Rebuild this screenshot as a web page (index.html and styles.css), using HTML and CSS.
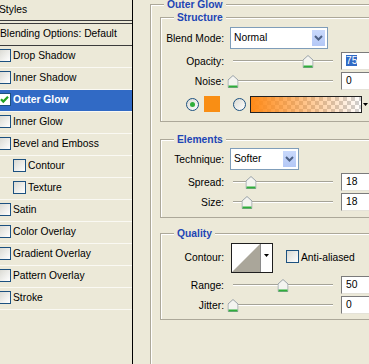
FILE: index.html
```html
<!DOCTYPE html>
<html lang="en">
<head>
    <meta charset="UTF-8">
    <title>Layer Style - Outer Glow</title>
    <link rel="stylesheet" href="styles.css">
</head>
<body>

<div class="window">
    <div class="styles-list">
        <div class="list-head">Styles</div>
        <div class="list-blend">Blending Options: Default</div>
        <div class="list-item"><span class="check"></span>Drop Shadow</div>
        <div class="list-item"><span class="check"></span>Inner Shadow</div>
        <div class="list-item selected">
            <span class="check checked">
                <svg width="11" height="11" viewBox="0 0 11 11"><path d="M2 5.2 L4.3 7.6 L9 2.8" fill="none" stroke="#21a121" stroke-width="2.2"/></svg>
            </span>Outer Glow
        </div>
        <div class="list-item"><span class="check"></span>Inner Glow</div>
        <div class="list-item"><span class="check"></span>Bevel and Emboss</div>
        <div class="list-item sub"><span class="check"></span>Contour</div>
        <div class="list-item sub"><span class="check"></span>Texture</div>
        <div class="list-item"><span class="check"></span>Satin</div>
        <div class="list-item"><span class="check"></span>Color Overlay</div>
        <div class="list-item"><span class="check"></span>Gradient Overlay</div>
        <div class="list-item"><span class="check"></span>Pattern Overlay</div>
        <div class="list-item"><span class="check"></span>Stroke</div>
    </div>

    <div class="panel">
        <fieldset class="group outer">
            <legend>Outer Glow</legend>

            <fieldset class="group structure">
                <legend>Structure</legend>
                <div class="row select-row">
                    <span class="label">Blend Mode:</span>
                    <div class="select blend">
                        <span class="select-text">Normal</span>
                        <span class="select-btn"><svg width="9" height="6" viewBox="0 0 9 6"><path d="M1 1 L4.5 4.5 L8 1" fill="none" stroke="#4d6185" stroke-width="2"/></svg></span>
                    </div>
                </div>
                <div class="row">
                    <span class="label">Opacity:</span>
                    <div class="slider">
                        <div class="track"></div>
                        <span class="thumb" style="left: 75%"><svg width="11" height="13" viewBox="0 0 11 13"><path d="M0.5 5 L5.5 0.5 L10.5 5 V12.5 H0.5 Z" fill="#f4f4f0" stroke="#9aa3a8"/><path d="M1 11.5 H10" stroke="#2fae3a" stroke-width="2"/></svg></span>
                    </div>
                    <span class="field"><span class="selected-text">75</span></span>
                </div>
                <div class="row">
                    <span class="label">Noise:</span>
                    <div class="slider">
                        <div class="track"></div>
                        <span class="thumb" style="left: 0%"><svg width="11" height="13" viewBox="0 0 11 13"><path d="M0.5 5 L5.5 0.5 L10.5 5 V12.5 H0.5 Z" fill="#f4f4f0" stroke="#9aa3a8"/><path d="M1 11.5 H10" stroke="#2fae3a" stroke-width="2"/></svg></span>
                    </div>
                    <span class="field">0</span>
                </div>
                <div class="color-row">
                    <span class="radio on"><span class="dot"></span></span>
                    <span class="swatch"></span>
                    <span class="radio"></span>
                    <span class="gradient"></span>
                    <span class="grad-arrow"><svg width="5" height="3" viewBox="0 0 5 3"><path d="M0 0 H5 L2.5 3 Z" fill="#000"/></svg></span>
                </div>
            </fieldset>

            <fieldset class="group elements">
                <legend>Elements</legend>
                <div class="row select-row">
                    <span class="label">Technique:</span>
                    <div class="select technique">
                        <span class="select-text">Softer</span>
                        <span class="select-btn"><svg width="9" height="6" viewBox="0 0 9 6"><path d="M1 1 L4.5 4.5 L8 1" fill="none" stroke="#4d6185" stroke-width="2"/></svg></span>
                    </div>
                </div>
                <div class="row">
                    <span class="label">Spread:</span>
                    <div class="slider">
                        <div class="track"></div>
                        <span class="thumb" style="left: 18%"><svg width="11" height="13" viewBox="0 0 11 13"><path d="M0.5 5 L5.5 0.5 L10.5 5 V12.5 H0.5 Z" fill="#f4f4f0" stroke="#9aa3a8"/><path d="M1 11.5 H10" stroke="#2fae3a" stroke-width="2"/></svg></span>
                    </div>
                    <span class="field">18</span>
                </div>
                <div class="row">
                    <span class="label">Size:</span>
                    <div class="slider">
                        <div class="track"></div>
                        <span class="thumb" style="left: 14%"><svg width="11" height="13" viewBox="0 0 11 13"><path d="M0.5 5 L5.5 0.5 L10.5 5 V12.5 H0.5 Z" fill="#f4f4f0" stroke="#9aa3a8"/><path d="M1 11.5 H10" stroke="#2fae3a" stroke-width="2"/></svg></span>
                    </div>
                    <span class="field">18</span>
                </div>
            </fieldset>

            <fieldset class="group quality">
                <legend>Quality</legend>
                <div class="contour-row">
                    <span class="label">Contour:</span>
                    <div class="contour-pick">
                        <span class="contour-img"><svg width="28" height="28" viewBox="0 0 28 28"><rect width="28" height="28" fill="#fff"/><path d="M0 28 L28 0 V28 Z" fill="#aaa69a"/></svg></span>
                        <span class="contour-arrow"><svg width="5" height="3" viewBox="0 0 5 3"><path d="M0 0 H5 L2.5 3 Z" fill="#000"/></svg></span>
                    </div>
                    <span class="check aa"></span>
                    <span class="aa-text">Anti-aliased</span>
                </div>
                <div class="row">
                    <span class="label">Range:</span>
                    <div class="slider">
                        <div class="track"></div>
                        <span class="thumb" style="left: 50%"><svg width="11" height="13" viewBox="0 0 11 13"><path d="M0.5 5 L5.5 0.5 L10.5 5 V12.5 H0.5 Z" fill="#f4f4f0" stroke="#9aa3a8"/><path d="M1 11.5 H10" stroke="#2fae3a" stroke-width="2"/></svg></span>
                    </div>
                    <span class="field">50</span>
                </div>
                <div class="row">
                    <span class="label">Jitter:</span>
                    <div class="slider">
                        <div class="track"></div>
                        <span class="thumb" style="left: 0%"><svg width="11" height="13" viewBox="0 0 11 13"><path d="M0.5 5 L5.5 0.5 L10.5 5 V12.5 H0.5 Z" fill="#f4f4f0" stroke="#9aa3a8"/><path d="M1 11.5 H10" stroke="#2fae3a" stroke-width="2"/></svg></span>
                    </div>
                    <span class="field">0</span>
                </div>
            </fieldset>
        </fieldset>
    </div>
</div>

</body>
</html>
```

FILE: styles.css
```css
* {
    margin: 0;
    padding: 0;
    box-sizing: border-box;
}

html, body {
    height: 100%;
    overflow: hidden;
}

body {
    background: #ece9d8;
    font-family: "Liberation Sans", Arial, sans-serif;
    font-size: 10.3px;
    color: #000;
}

.window {
    display: flex;
    width: 369px;
    height: 364px;
    overflow: hidden;
}

/* left: list of styles */
.styles-list {
    flex: 0 0 139px;
    margin-left: -6px;
    border-right: 1px solid #000;
}

.list-head {
    height: 24px;
    padding-left: 5px;
    line-height: 19px;
    border-bottom: 4px double #3c3c3c;
}

.list-blend {
    height: 22px;
    padding-left: 6px;
    line-height: 19px;
    border-bottom: 1px solid #3c3c3c;
}

.list-item {
    display: flex;
    align-items: center;
    height: 22px;
    padding-left: 4px;
    padding-bottom: 2px;
    border-bottom: 1px solid #faf9f3;
    white-space: nowrap;
}

.list-item.sub { padding-left: 19px; }

.list-item.selected {
    background: #316ac5;
    color: #fff;
    font-weight: bold;
}

.check {
    display: inline-flex;
    align-items: center;
    justify-content: center;
    width: 13px;
    height: 13px;
    margin-right: 2px;
    border: 1px solid #1c5180;
    background: linear-gradient(135deg, #d9d9d2, #fff);
    flex-shrink: 0;
}

.check.checked { background: #fff; }

/* right: options */
.panel {
    flex: 0 0 auto;
    padding-left: 17px;
}

.group {
    border: 1px solid #aca899;
    box-shadow: inset 1px 1px 0 #fff;
    min-inline-size: 0;
}

.group legend {
    margin-left: 13px;
    padding: 0 3px;
    line-height: 13px;
    font-weight: bold;
    color: #1d45b5;
    background: #ece9d8;
}

.group.outer {
    width: 260px;
    height: 400px;
    margin-top: -2px;
    padding-left: 9px;
}

.group.outer > legend { margin-left: 4px; }

.group.structure,
.group.elements,
.group.quality {
    width: 224px;
}

.structure { padding-bottom: 8px; }
.elements { margin-top: 11px; padding-bottom: 5px; }
.quality { margin-top: 9px; padding-bottom: 4px; }

.row {
    display: flex;
    align-items: center;
    height: 20px;
}

.structure .select-row { height: 22px; margin-top: 3px; margin-bottom: 2px; }
.elements .select-row { height: 22px; margin-top: 2px; margin-bottom: 2px; }

.label {
    width: 63px;
    flex-shrink: 0;
    text-align: right;
    white-space: nowrap;
}

.select {
    display: flex;
    height: 22px;
    margin-left: 6px;
    border: 1px solid #7f9db9;
    background: #fff;
}

.select.blend { width: 98px; }
.select.technique { width: 69px; }

.select-text {
    flex: 1;
    padding-left: 3px;
    line-height: 20px;
}

.select-btn {
    display: flex;
    align-items: center;
    justify-content: center;
    width: 15px;
    margin: 1px;
    border: 1px solid #fff;
    background: linear-gradient(#c9d9fc, #b4c8f6);
}

.slider {
    position: relative;
    display: flex;
    align-items: center;
    width: 100px;
    height: 20px;
    margin-left: 9px;
    flex-shrink: 0;
}

.track {
    width: 100%;
    height: 2px;
    border-top: 1px solid #a5a397;
    border-bottom: 1px solid #fff;
}

.thumb {
    position: absolute;
    top: 4px;
    display: flex;
    transform: translateX(-50%);
}

.field {
    width: 36px;
    height: 18px;
    margin-left: 8px;
    flex-shrink: 0;
    padding-left: 4px;
    line-height: 16px;
    background: #fff;
    border: 1px solid;
    border-color: #7b7b7b #e4e2d8 #e4e2d8 #7b7b7b;
}

.selected-text {
    background: #316ac5;
    color: #fff;
}

.color-row {
    display: flex;
    align-items: center;
    height: 18px;
    margin-top: 4px;
    padding-left: 25px;
}

.radio {
    display: flex;
    align-items: center;
    justify-content: center;
    width: 13px;
    height: 13px;
    border-radius: 50%;
    border: 1px solid #1c5180;
    background: linear-gradient(135deg, #d9d9d2, #fff);
}

.radio .dot {
    width: 5px;
    height: 5px;
    border-radius: 50%;
    background: #2fae3a;
}

.radio.on { margin-right: 5px; }

.swatch {
    width: 16px;
    height: 16px;
    margin-right: 13px;
    background: #f98e14;
}

.gradient {
    width: 112px;
    height: 17px;
    margin-left: 4px;
    border: 1px solid #222;
    background:
        linear-gradient(to right, #ff8a18, rgba(255, 138, 24, 0)),
        repeating-conic-gradient(#cfcfcf 0 25%, #fff 0 50%) 0 0 / 8px 8px;
}

.grad-arrow {
    display: flex;
    align-items: center;
    justify-content: center;
    width: 7px;
    height: 17px;
}

.contour-row {
    display: flex;
    align-items: flex-start;
    height: 30px;
    margin-top: 3px;
    margin-bottom: 2px;
}

.contour-row .label { line-height: 30px; }

.contour-pick {
    display: flex;
    width: 42px;
    height: 30px;
    margin-left: 7px;
    border: 1px solid #1e1e1e;
    background: #fff;
}

.contour-img { display: flex; }

.contour-arrow {
    flex: 1;
    display: flex;
    justify-content: center;
    padding-top: 10px;
    border-left: 1px solid #8a8a8a;
}

.check.aa {
    margin-left: 13px;
    margin-top: 7px;
}

.aa-text {
    line-height: 30px;
    white-space: nowrap;
}
```
